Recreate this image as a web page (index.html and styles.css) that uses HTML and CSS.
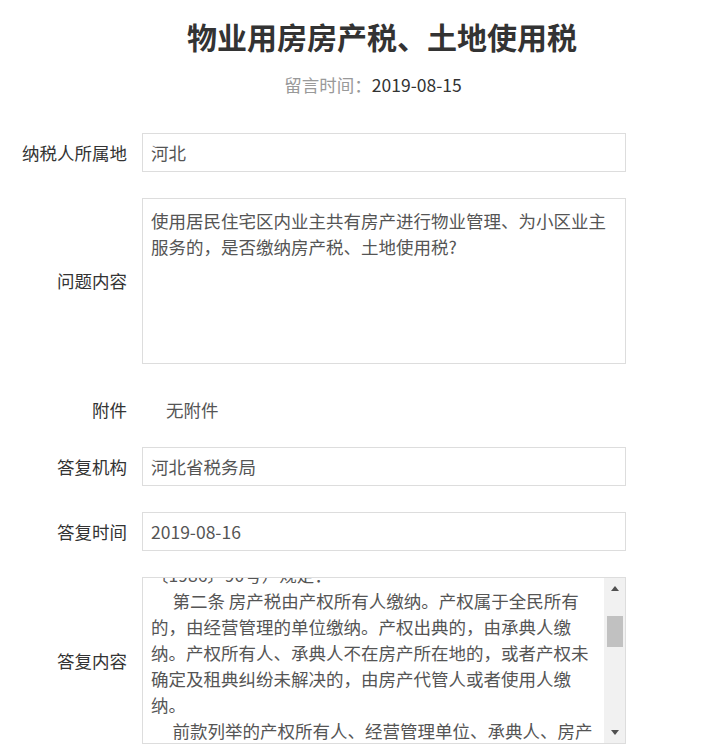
FILE: index.html
```html
<!DOCTYPE html>
<html lang="zh-CN">
<head>
  <meta charset="UTF-8">
  <meta name="viewport" content="width=device-width, initial-scale=1.0">
  <title>物业用房房产税、土地使用税</title>
  <link rel="stylesheet" href="styles.css">
</head>
<body>
  <h1 class="title">物业用房房产税、土地使用税</h1>
  <p class="meta"><span class="meta-label">留言时间：</span>2019-08-15</p>

  <div class="form">
    <div class="row">
      <label class="row-label">纳税人所属地</label>
      <div class="field">河北</div>
    </div>

    <div class="row">
      <label class="row-label">问题内容</label>
      <textarea class="field field-area" readonly>使用居民住宅区内业主共有房产进行物业管理、为小区业主服务的，是否缴纳房产税、土地使用税?</textarea>
    </div>

    <div class="row row-plain">
      <label class="row-label">附件</label>
      <span class="plain">无附件</span>
    </div>

    <div class="row">
      <label class="row-label">答复机构</label>
      <div class="field">河北省税务局</div>
    </div>

    <div class="row">
      <label class="row-label">答复时间</label>
      <div class="field">2019-08-16</div>
    </div>

    <div class="row">
      <label class="row-label">答复内容</label>
      <div class="field field-box">
        <div id="answer" class="box-text">您好！您提交的问题已收悉，现针对您所提供的信息简要回复如下：
　 一、房产税
　 根据《中华人民共和国房产税暂行条例》（国发〔1986〕90号）规定：
　 第二条 房产税由产权所有人缴纳。产权属于全民所有的，由经营管理的单位缴纳。产权出典的，由承典人缴纳。产权所有人、承典人不在房产所在地的，或者产权未确定及租典纠纷未解决的，由房产代管人或者使用人缴纳。
　 前款列举的产权所有人、经营管理单位、承典人、房产代管人或者使用人，统称为纳税义务人（以下简称纳税人）。
　 二、城镇土地使用税
　 根据《中华人民共和国城镇土地使用税暂行条例》（国务院令第483号）规定：
　 第二条 在城市、县城、建制镇、工矿区范围内使用土地的单位和个人，为城镇土地使用税（以下简称土地使用税）的纳税人，应当依照本条例的规定缴纳土地使用税。
　 《财政部 国家税务总局关于房产税城镇土地使用税有关问题的通知》（财税〔2009〕128号）第一条规定：无租使用其他单位房产的应税单位和个人，依照房产余值代缴纳房产税。
　 以上回复供您参考。如有疑问，请咨询当地主管税务机关。</div>
        <div class="scrollbar">
          <div class="sb-btn sb-up"></div>
          <div class="sb-track"><div class="sb-thumb"></div></div>
          <div class="sb-btn sb-down"></div>
        </div>
      </div>
    </div>
  </div>

  <script>
    document.addEventListener("DOMContentLoaded", function () {
      // keep the reply box at the same place as the screenshot
      document.getElementById("answer").scrollTop = 129;
    });
  </script>
</body>
</html>
```

FILE: styles.css
```css
body {
  margin: 0;
  font-family: "Noto Sans CJK SC", "Noto Sans", sans-serif;
  font-size: 17.5px;
  color: #333;
  background: #fff;
}

.title {
  margin: 15px 0 0;
  padding-left: 58px;
  text-align: center;
  font-size: 30px;
  line-height: 42px;
  font-weight: bold;
  color: #333;
}

.meta {
  margin: 15px 0 0;
  padding-left: 40px;
  text-align: center;
  line-height: 26px;
  color: #333;
}

.meta-label {
  color: #999;
}

.form {
  margin-top: 35px;
  padding-bottom: 30px;
}

.row {
  display: flex;
  align-items: center;
  gap: 15px;
  margin-bottom: 26px;
}

.row-label {
  width: 127px;
  flex-shrink: 0;
  text-align: right;
  line-height: 26px;
  color: #333;
}

.field {
  box-sizing: border-box;
  width: 484px;
  height: 39px;
  padding: 0 8px;
  border: 1px solid #ddd;
  line-height: 37px;
  color: #555;
  background: #fff;
}

.field-area {
  display: block;
  height: 166px;
  padding: 9px 8px;
  margin: 0;
  font: inherit;
  line-height: 26px;
  resize: none;
  outline: none;
  overflow-y: auto;
}

.field-box {
  display: flex;
  height: 167px;
  padding: 0;
}

.box-text {
  flex: 1;
  padding: 9px 8px;
  overflow: hidden;
  white-space: pre-wrap;
  line-height: 26px;
}

.scrollbar {
  width: 21px;
  flex-shrink: 0;
  display: flex;
  flex-direction: column;
  background: #f1f1f1;
}

.sb-btn {
  height: 21px;
  display: flex;
  align-items: center;
  justify-content: center;
}

.sb-btn::before {
  content: "";
  border-left: 4.5px solid transparent;
  border-right: 4.5px solid transparent;
}

.sb-up::before {
  border-bottom: 5px solid #505050;
}

.sb-down::before {
  border-top: 5px solid #505050;
}

.sb-track {
  flex: 1;
}

.sb-thumb {
  height: 31px;
  margin: 17px 2px 0 3px;
  background: #c1c1c1;
}

.row-plain {
  height: 40px;
  margin-bottom: 17px;
}

.plain {
  padding-left: 24px;
  line-height: 26px;
  color: #555;
}
```
